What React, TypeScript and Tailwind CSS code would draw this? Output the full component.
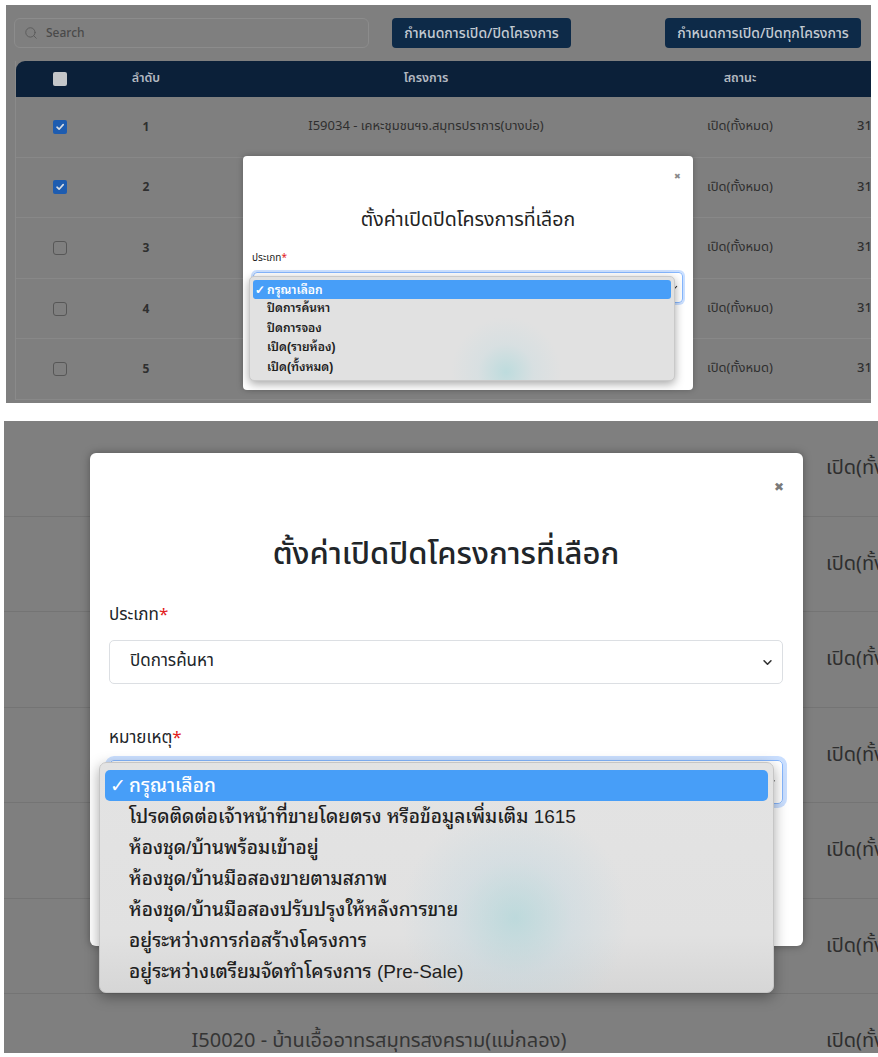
import React from "react";
import { Search } from "lucide-react";

const thai = "font-['Noto_Sans_Thai','Noto_Sans','Liberation_Sans',sans-serif]";
const menuFont =
  "font-['Liberation_Sans','Noto_Sans_Thai_Looped','Loma','Garuda','Waree','Tlwg_Typist','Noto_Sans_Thai',sans-serif]";

function CheckBox({ checked, header }: { checked?: boolean; header?: boolean }) {
  if (header) return <div className="h-[14px] w-[14px] rounded-[2px] bg-[#c4c6c9]" />;
  if (checked)
    return (
      <div className="flex h-[14px] w-[14px] items-center justify-center rounded-[2px] bg-[#1d5cb0]">
        <svg width="10" height="10" viewBox="0 0 10 10" fill="none">
          <path d="M2 5.2 4.1 7.2 8.2 2.6" stroke="#d8dde3" strokeWidth="1.6" strokeLinecap="round" strokeLinejoin="round" />
        </svg>
      </div>
    );
  return <div className="h-[14px] w-[14px] rounded-[3px] border border-[#575757]" />;
}

function Chevron({ size = 10, color = "#333" }: { size?: number; color?: string }) {
  return (
    <svg width={size} height={size} viewBox="0 0 16 16" fill="none">
      <path d="M3 5.5 8 10.5 13 5.5" stroke={color} strokeWidth="2.4" strokeLinecap="round" strokeLinejoin="round" />
    </svg>
  );
}

const topRows = [
  { n: 1, checked: true, name: "I59034 - เคหะชุมชนฯจ.สมุทรปราการ(บางบ่อ)" },
  { n: 2, checked: true, name: "I59035 - เคหะชุมชนฯจ.สมุทรปราการ(บางพลี)" },
  { n: 3, checked: false, name: "I50020 - บ้านเอื้ออาทรสมุทรสงคราม(แม่กลอง)" },
  { n: 4, checked: false, name: "I50021 - บ้านเอื้ออาทรสมุทรสาคร(กระทุ่มแบน)" },
  { n: 5, checked: false, name: "I50022 - บ้านเอื้ออาทรราชบุรี(โพธาราม)" },
];

function TopPanel() {
  return (
    <div className={`relative ml-[6px] h-[398px] w-[865px] overflow-hidden bg-[#7f7f7f] ${thai}`}>
      {/* toolbar */}
      <div className="flex items-center pl-[8px] pt-[13px]">
        <div className="flex h-[30px] w-[355px] items-center gap-[8px] rounded-[6px] border border-[#8c8c8c] pl-[9px]">
          <Search size={14} strokeWidth={1.6} color="#5a5a5a" />
          <span className="text-[12px] font-medium text-[#4a4a4a]">Search</span>
        </div>
        <div className="ml-[23px] flex h-[30px] w-[179px] items-center justify-center whitespace-nowrap rounded-[4px] bg-[#0d2a48] text-[14px] font-medium text-[#c4cbd3]">
          กำหนดการเปิด/ปิดโครงการ
        </div>
        <div className="ml-[94px] flex h-[30px] w-[196px] items-center justify-center whitespace-nowrap rounded-[4px] bg-[#0d2a48] text-[14px] font-medium text-[#c4cbd3]">
          กำหนดการเปิด/ปิดทุกโครงการ
        </div>
      </div>

      {/* table */}
      <div className="ml-[9px] mt-[13px] w-[856px] border-l border-[#8a8a8a]">
        <div className="grid h-[36px] grid-cols-[88px_84px_476px_152px_1fr] items-center rounded-tl-[9px] bg-[#0b2039] text-[12.5px] font-semibold text-[#b3b9c1]">
          <div className="flex justify-center">
            <CheckBox header />
          </div>
          <div className="text-center">ลำดับ</div>
          <div className="text-center">โครงการ</div>
          <div className="text-center">สถานะ</div>
          <div />
        </div>
        {topRows.map((r) => (
          <div
            key={r.n}
            className="grid h-[60.6px] grid-cols-[88px_84px_476px_152px_1fr] items-center border-b border-[#888888] text-[13px] text-[#2f2f2f]"
          >
            <div className="flex justify-center">
              <CheckBox checked={r.checked} />
            </div>
            <div className="text-center text-[12px] font-bold">{r.n}</div>
            <div className="text-center">{r.name}</div>
            <div className="text-center">เปิด(ทั้งหมด)</div>
            <div className="pl-[41px] font-medium">31</div>
          </div>
        ))}
      </div>

      {/* modal */}
      <div className="absolute left-[237px] top-[151px] h-[234px] w-[450px] rounded-[4px] bg-white px-[10px] shadow-[0_0_6px_rgba(0,0,0,0.25)]">
        <div className="absolute right-[12px] top-[16px] text-[8px] leading-[10px] text-[#8a8a8a]">✖</div>
        <div className="pt-[52px] text-center text-[19.5px] leading-[24px] text-[#222]">ตั้งค่าเปิดปิดโครงการที่เลือก</div>
        <div className="-ml-px mt-[19px] text-[10px] leading-[14px] text-[#222]">
          ประเภท<span className="text-[#e21b1b]">*</span>
        </div>
        <div className="mt-[7px] flex h-[31px] items-center justify-end rounded-[4px] border border-[#86b7fe] pr-[4px] shadow-[0_0_0_2px_rgba(13,110,253,0.22)]">
          <Chevron size={7} />
        </div>

        {/* dropdown */}
        <div
          className={`absolute left-[6px] top-[120px] h-[105px] w-[426px] overflow-hidden rounded-[5px] border border-[#c9c9c9] bg-[#e1e1e1] bg-[radial-gradient(circle_at_256px_95px,rgba(160,215,218,0.55)_0px,rgba(195,220,226,0.3)_28px,rgba(225,225,225,0)_55px)] p-[3px] shadow-[0_3px_10px_rgba(0,0,0,0.35)] ${menuFont}`}
        >
          <div className="flex h-[19px] items-center rounded-[3px] bg-[#479ef8] pl-[2px] text-[12px] font-semibold leading-[16px] text-white">
            <span className="w-[12px]">✓</span>กรุณาเลือก
          </div>
          {["ปิดการค้นหา", "ปิดการจอง", "เปิด(รายห้อง)", "เปิด(ทั้งหมด)"].map((t) => (
            <div key={t} className="flex h-[19.6px] items-center pl-[14px] text-[12px] font-semibold leading-[15px] text-[#222]">
              {t}
            </div>
          ))}
        </div>
      </div>
    </div>
  );
}

const bottomOptions = [
  "โปรดติดต่อเจ้าหน้าที่ขายโดยตรง หรือข้อมูลเพิ่มเติม 1615",
  "ห้องชุด/บ้านพร้อมเข้าอยู่",
  "ห้องชุด/บ้านมือสองขายตามสภาพ",
  "ห้องชุด/บ้านมือสองปรับปรุงให้หลังการขาย",
  "อยู่ระหว่างการก่อสร้างโครงการ",
  "อยู่ระหว่างเตรียมจัดทำโครงการ (Pre-Sale)",
];

function BottomPanel() {
  const rows = [0, 1, 2, 3, 4, 5, 6];
  return (
    <div className={`relative ml-[4px] h-[632px] w-[874px] overflow-hidden bg-[#7f7f7f] ${thai}`}>
      {rows.map((i) => (
        <div
          key={i}
          className="grid h-[95.5px] shrink-0 grid-cols-[750px_72px_1fr] items-center border-b border-[#747474] text-[20px] text-[#2e2e2e]"
        >
          <div className="text-center text-[#353535]">
            {i === 6 ? "I50020 - บ้านเอื้ออาทรสมุทรสงคราม(แม่กลอง)" : ""}
          </div>
          <div />
          <div className="whitespace-nowrap">เปิด(ทั้ง</div>
        </div>
      ))}

      {/* modal */}
      <div className="absolute left-[86px] top-[32px] h-[493px] w-[713px] rounded-[6px] bg-white pl-[19px] pr-[20px] shadow-[0_0_8px_rgba(0,0,0,0.35)]">
        <div className="absolute right-[19px] top-[28px] text-[12px] leading-[12px] text-[#7a7a7a]">✖</div>
        <div className="pt-[84px] text-center text-[31px] font-medium leading-[36px] text-[#212529]">ตั้งค่าเปิดปิดโครงการที่เลือก</div>
        <div className="mt-[30px] text-[17px] leading-[24px] text-[#212529]">
          ประเภท<span className="text-[#e21b1b]">*</span>
        </div>
        <div className="mt-[13px] flex h-[44px] items-center justify-between rounded-[5px] border border-[#dcdfe3] pl-[20px] pr-[9px] text-[17px] text-[#212529]">
          <span>ปิดการค้นหา</span>
          <Chevron size={11} />
        </div>
        <div className="mt-[42px] text-[17px] leading-[24px] text-[#212529]">
          หมายเหตุ<span className="text-[#e21b1b]">*</span>
        </div>
        <div className="mt-[10px] flex h-[44px] items-center justify-end rounded-[5px] border border-[#86b7fe] pr-[6px] shadow-[0_0_0_4px_rgba(13,110,253,0.22)]">
          <Chevron size={11} />
        </div>
      </div>

      {/* dropdown */}
      <div
        className={`absolute left-[95px] top-[341px] h-[231px] w-[675px] overflow-hidden rounded-[7px] border border-[#c6c6c6] bg-[linear-gradient(180deg,#e3e3e3_0%,#e1e1e1_75%,#d6d6d6_100%)] shadow-[0_4px_14px_rgba(0,0,0,0.35)] ${menuFont}`}
      >
        <div className="pointer-events-none absolute left-[300px] top-[40px] h-[230px] w-[230px] rounded-full bg-[radial-gradient(circle,rgba(165,212,216,0.6)_0%,rgba(190,215,225,0.35)_35%,rgba(225,225,225,0)_70%)]" />
        <div className="relative px-[5px] pt-[7px]">
          <div className="flex h-[31px] items-center rounded-[5px] bg-[#479ef8] pl-[5px] text-[19px] font-medium leading-[26px] text-white">
            <span className="w-[19px]">✓</span>กรุณาเลือก
          </div>
          {bottomOptions.map((t) => (
            <div key={t} className="flex h-[31px] items-center pl-[24px] text-[19px] font-medium leading-[26px] text-[#1f1f1f]">
              {t}
            </div>
          ))}
        </div>
      </div>
    </div>
  );
}

export default function App() {
  return (
    <div className="flex min-h-[1057px] w-[878px] flex-col gap-[18px] bg-white pt-[5px]">
      <TopPanel />
      <BottomPanel />
    </div>
  );
}
